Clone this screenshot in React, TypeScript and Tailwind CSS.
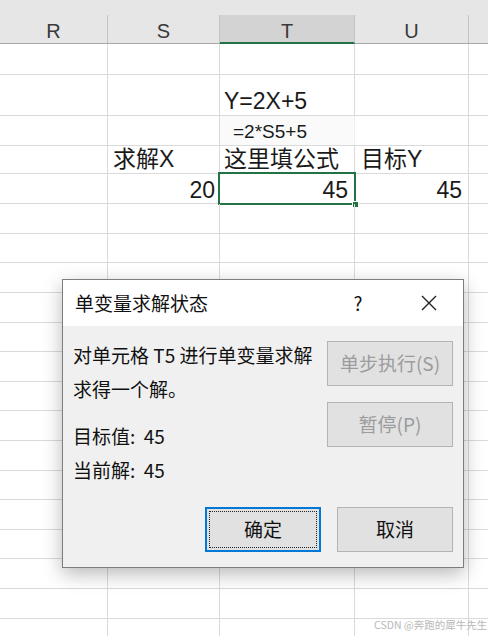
import React from 'react';

const sheetFont = { fontFamily: '"Liberation Sans", "Noto Sans CJK SC", sans-serif' };
const uiFont = { fontFamily: '"Noto Sans CJK SC", "Liberation Sans", sans-serif' };

const cols = [
  { key: 'R', w: 'w-[108px]' },
  { key: 'S', w: 'w-[112px]' },
  { key: 'T', w: 'w-[135px]' },
  { key: 'U', w: 'w-[114px]' },
];

// row heights incl. bottom grid line
const rowHeights = [31, 41, 30, 28, 30, 30, 29, 30, 30, 29, 30, 29, 30, 30, 29, 30, 29, 30, 30, 30];

const rowClass: Record<number, string> = {
  28: 'h-[28px]',
  29: 'h-[29px]',
  30: 'h-[30px]',
  31: 'h-[31px]',
  41: 'h-[41px]',
};

function Cell({
  w,
  children,
  className = '',
}: {
  w: string;
  children?: React.ReactNode;
  className?: string;
}) {
  return (
    <div className={`${w} shrink-0 border-r border-[#dadada] flex items-end relative ${className}`}>
      {children}
    </div>
  );
}

function SheetRow({ h, cells }: { h: number; cells?: React.ReactNode[] }) {
  return (
    <div className={`flex ${rowClass[h]} border-b border-[#dadada]`}>
      {cols.map((c, i) => (
        <Cell key={c.key} w={c.w}>
          {cells?.[i]}
        </Cell>
      ))}
      <div className="flex-1" />
    </div>
  );
}

function Header() {
  return (
    <div className="bg-[#e6e6e6]">
      <div className="h-[15px]" />
      <div className="flex h-[29px] border-b border-[#a8a8a8] text-[20px] leading-none text-[#3a3a3a]">
        {cols.map((c) => (
          <div
            key={c.key}
            className={`${c.w} shrink-0 border-r border-[#c4c4c4] flex items-end justify-center ${
              c.key === 'T' ? 'bg-[#d3d3d3] border-b-2 border-b-[#217346] pb-[1px] -mb-[1px]' : 'pb-[2px]'
            }`}
          >
            {c.key}
          </div>
        ))}
        <div className="flex-1" />
      </div>
    </div>
  );
}

function Button({
  children,
  disabled,
  focused,
  w,
}: {
  children: React.ReactNode;
  disabled?: boolean;
  focused?: boolean;
  w: string;
}) {
  return (
    <div
      className={`${w} h-[45px] relative flex items-center justify-center bg-[#e1e1e1] text-[19px] ${
        focused ? 'border-2 border-[#0078d7]' : 'border border-[#b4b4b4]'
      } ${disabled ? 'text-[#9c9c9c]' : 'text-[#111]'}`}
    >
      {focused && <span className="absolute inset-[2px] border border-dotted border-[#222]" />}
      {children}
    </div>
  );
}

function Dialog() {
  return (
    <div
      className="absolute left-[62px] top-[279px] w-[402px] h-[289px] border border-[#7d7d7d] bg-[#f0f0f0] flex flex-col shadow-[0_6px_18px_rgba(0,0,0,0.28)]"
      style={uiFont}
    >
      <div className="h-[46px] bg-white flex items-center pl-[12px] pr-[26px] text-[19px] text-[#111]">
        <span>单变量求解状态</span>
        <span className="ml-auto w-[20px] text-center">?</span>
        <svg className="ml-[53px]" width="16" height="16" viewBox="0 0 16 16">
          <path d="M1 1 L15 15 M15 1 L1 15" stroke="#222" strokeWidth="1.4" fill="none" />
        </svg>
      </div>
      <div className="flex flex-1 pl-[10px] pr-[10px] pt-[12px] text-[19px] text-[#111]">
        <div className="flex-1 leading-[34px]">
          <div>对单元格 T5 进行单变量求解</div>
          <div>求得一个解。</div>
          <div className="mt-[13px]">目标值:&nbsp;&nbsp;45</div>
          <div>当前解:&nbsp;&nbsp;45</div>
        </div>
        <div className="flex flex-col gap-[16px] pt-[3px]">
          <Button w="w-[126px]" disabled>
            单步执行(S)
          </Button>
          <Button w="w-[126px]" disabled>
            暂停(P)
          </Button>
        </div>
      </div>
      <div className="flex justify-end gap-[16px] pr-[10px] pb-[15px]">
        <Button w="w-[116px]" focused>
          确定
        </Button>
        <Button w="w-[116px]">取消</Button>
      </div>
    </div>
  );
}

export default function App() {
  const txt = 'text-[23px] leading-none text-[#1a1a1a]';
  return (
    <div className="relative w-[488px] h-[636px] overflow-hidden bg-white" style={sheetFont}>
      <Header />
      <SheetRow h={rowHeights[0]} />
      <SheetRow h={rowHeights[1]} cells={[null, null, <span className={`${txt} pl-[4px] pb-[2px]`}>Y=2X+5</span>]} />
      <div className={`flex ${rowClass[rowHeights[2]]} border-b border-[#dadada]`}>
        <Cell w="w-[108px]" />
        <Cell w="w-[112px]" />
        <Cell w="w-[135px]" className="bg-[#fafafa] border-r-[#eeeeee]">
          <span className="text-[19px] leading-none text-[#1a1a1a] pl-[13px] pb-[4px]">=2*S5+5</span>
        </Cell>
        <Cell w="w-[114px]" />
        <div className="flex-1" />
      </div>
      <SheetRow
        h={rowHeights[3]}
        cells={[
          null,
          <span className={`${txt} pl-[5px] pb-[2px]`}>求解X</span>,
          <span className={`${txt} pl-[4px] pb-[2px]`}>这里填公式</span>,
          <span className={`${txt} pl-[6px] pb-[2px]`}>目标Y</span>,
        ]}
      />
      <SheetRow
        h={rowHeights[4]}
        cells={[
          null,
          <span className={`${txt} ml-auto pr-[4px] pb-[1px]`}>20</span>,
          <>
            <span className={`${txt} ml-auto pr-[6px] pb-[1px]`}>45</span>
            <span className="absolute -left-[2px] -top-[2px] -right-[2px] -bottom-[2px] border-2 border-[#217346]" />
            <span className="absolute -right-[5px] -bottom-[5px] w-[7px] h-[7px] bg-[#217346] border border-white" />
          </>,
          <span className={`${txt} ml-auto pr-[6px] pb-[1px]`}>45</span>,
        ]}
      />
      {rowHeights.slice(5).map((h, i) => (
        <SheetRow key={i} h={h} />
      ))}
      <Dialog />
      <div
        className="absolute left-[374px] top-[620px] whitespace-nowrap text-[10.5px] leading-none text-[#b8b8b8]"
        style={uiFont}
      >
        CSDN @奔跑的犀牛先生
      </div>
    </div>
  );
}
